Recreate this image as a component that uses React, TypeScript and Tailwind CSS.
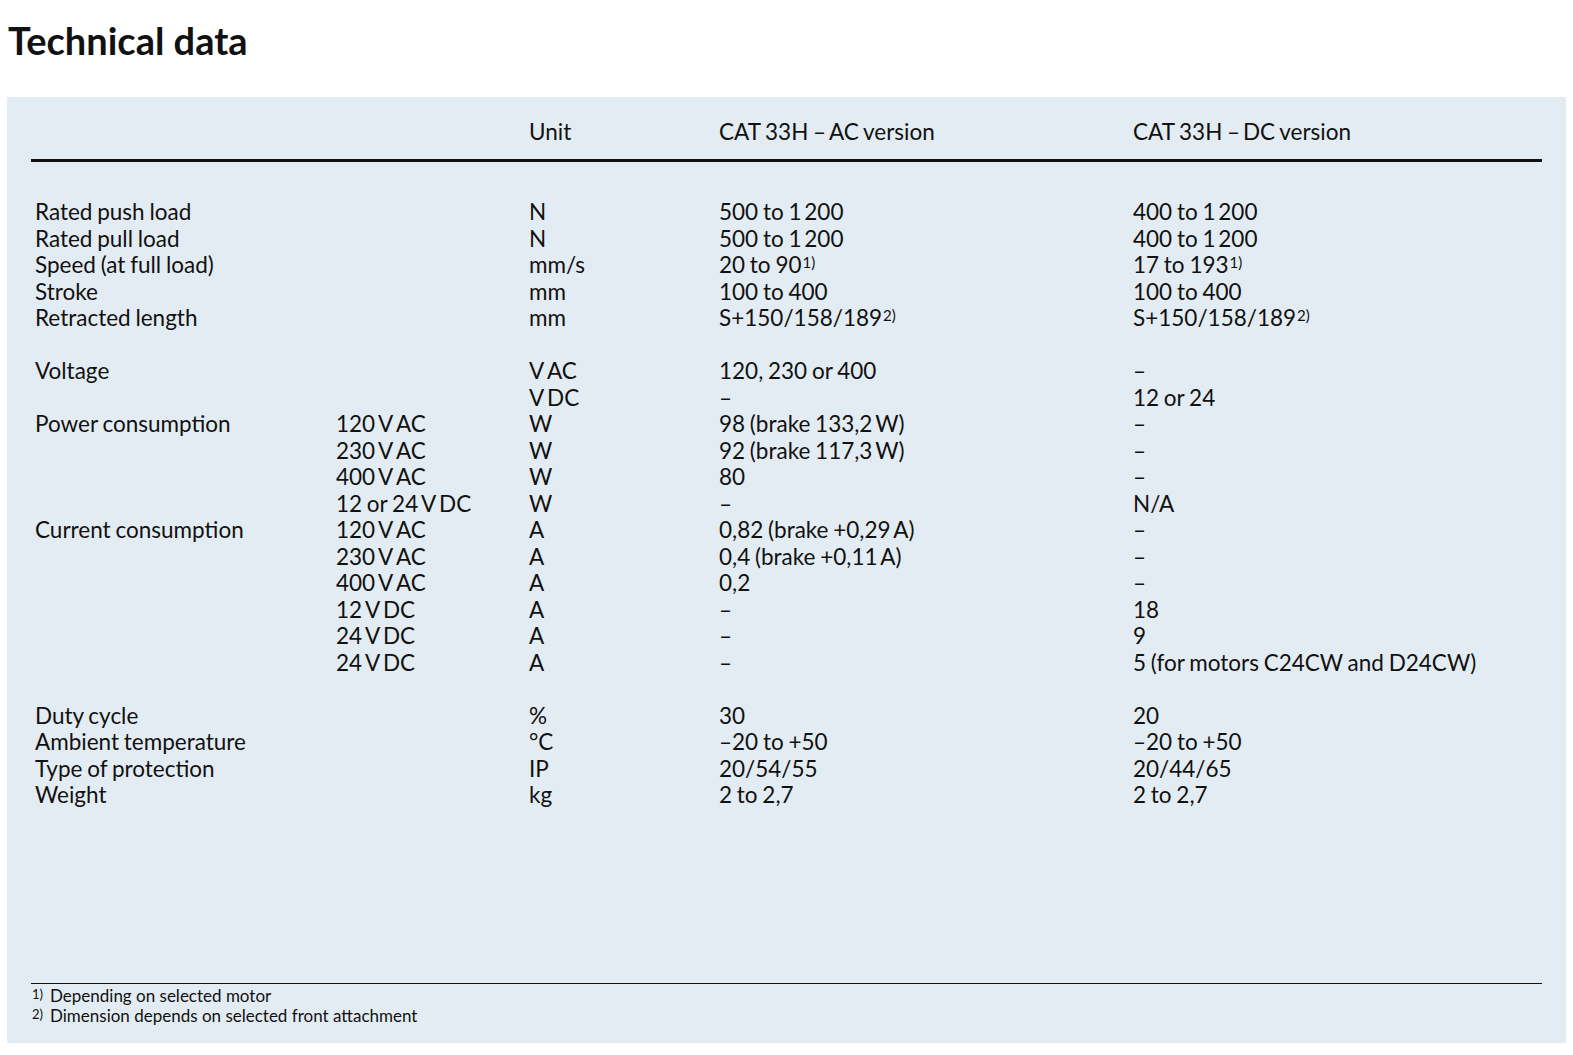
import React from "react";

type Row = {
  label?: string;
  sub?: string;
  unit?: string;
  ac?: React.ReactNode;
  dc?: React.ReactNode;
};

const Sup = ({ n }: { n: number }) => (
  <span className="relative -top-[5px] text-[15px] ml-[1px]">{n})</span>
);

const rows: (Row | null)[] = [
  { label: "Rated push load", unit: "N", ac: "500 to 1\u2009200", dc: "400 to 1\u2009200" },
  { label: "Rated pull load", unit: "N", ac: "500 to 1\u2009200", dc: "400 to 1\u2009200" },
  {
    label: "Speed (at full load)",
    unit: "mm/s",
    ac: (
      <>
        20 to 90
        <Sup n={1} />
      </>
    ),
    dc: (
      <>
        17 to 193
        <Sup n={1} />
      </>
    ),
  },
  { label: "Stroke", unit: "mm", ac: "100 to 400", dc: "100 to 400" },
  {
    label: "Retracted length",
    unit: "mm",
    ac: (
      <>
        S+150/158/189
        <Sup n={2} />
      </>
    ),
    dc: (
      <>
        S+150/158/189
        <Sup n={2} />
      </>
    ),
  },
  null,
  { label: "Voltage", unit: "V\u2009AC", ac: "120, 230 or 400", dc: "–" },
  { unit: "V\u2009DC", ac: "–", dc: "12 or 24" },
  { label: "Power consumption", sub: "120\u2009V\u2009AC", unit: "W", ac: "98 (brake 133,2\u2009W)", dc: "–" },
  { sub: "230\u2009V\u2009AC", unit: "W", ac: "92 (brake 117,3\u2009W)", dc: "–" },
  { sub: "400\u2009V\u2009AC", unit: "W", ac: "80", dc: "–" },
  { sub: "12 or 24\u2009V\u2009DC", unit: "W", ac: "–", dc: "N/A" },
  { label: "Current consumption", sub: "120\u2009V\u2009AC", unit: "A", ac: "0,82 (brake +0,29\u2009A)", dc: "–" },
  { sub: "230\u2009V\u2009AC", unit: "A", ac: "0,4 (brake +0,11\u2009A)", dc: "–" },
  { sub: "400\u2009V\u2009AC", unit: "A", ac: "0,2", dc: "–" },
  { sub: "12\u2009V\u2009DC", unit: "A", ac: "–", dc: "18" },
  { sub: "24\u2009V\u2009DC", unit: "A", ac: "–", dc: "9" },
  { sub: "24\u2009V\u2009DC", unit: "A", ac: "–", dc: "5 (for motors C24CW and D24CW)" },
  null,
  { label: "Duty cycle", unit: "%", ac: "30", dc: "20" },
  { label: "Ambient temperature", unit: "°C", ac: "–20 to +50", dc: "–20 to +50" },
  { label: "Type of protection", unit: "IP", ac: "20/54/55", dc: "20/44/65" },
  { label: "Weight", unit: "kg", ac: "2 to 2,7", dc: "2 to 2,7" },
];

const cols = "grid grid-cols-[301px_193px_190px_414px_1fr]";

export default function App() {
  return (
    <div
      className="bg-white min-h-screen text-[#111]"
      style={{ fontFamily: "Lato, 'Liberation Sans', sans-serif" }}
    >
      <h1 className="pl-[8px] pt-[17px] h-[97px] text-[38px] leading-[46px] font-bold">
        Technical data
      </h1>

      <div className="mx-[7px] h-[946px] bg-[#e3ecf2] px-[24px] pt-[22px] pb-[17px] flex flex-col">
        <div className={`${cols} pl-[4px] text-[22.5px] leading-[26px] h-[28px] [word-spacing:-1px]`}>
          <div />
          <div />
          <div>Unit</div>
          <div>CAT 33H –{"\u2009"}AC version</div>
          <div>CAT 33H –{"\u2009"}DC version</div>
        </div>
        <div className="mt-[12px] h-[3px] bg-[#111]" />

        <div className="mt-[37px] pl-[4px] text-[22.5px] leading-[26.5px] [word-spacing:-1px]">
          {rows.map((r, i) =>
            r ? (
              <div key={i} className={`${cols} h-[26.5px] whitespace-nowrap`}>
                <div>{r.label}</div>
                <div>{r.sub}</div>
                <div>{r.unit}</div>
                <div>{r.ac}</div>
                <div>{r.dc}</div>
              </div>
            ) : (
              <div key={i} className="h-[26.5px]" />
            )
          )}
        </div>

        <div className="mt-auto border-t border-[#111] pt-[2px] text-[17px] leading-[20px]">
          <div className="flex">
            <span className="w-[19px] text-[13px] relative -top-[2px] pl-[1px]">1)</span>
            <span>Depending on selected motor</span>
          </div>
          <div className="flex">
            <span className="w-[19px] text-[13px] relative -top-[2px] pl-[1px]">2)</span>
            <span>Dimension depends on selected front attachment</span>
          </div>
        </div>
      </div>
    </div>
  );
}
